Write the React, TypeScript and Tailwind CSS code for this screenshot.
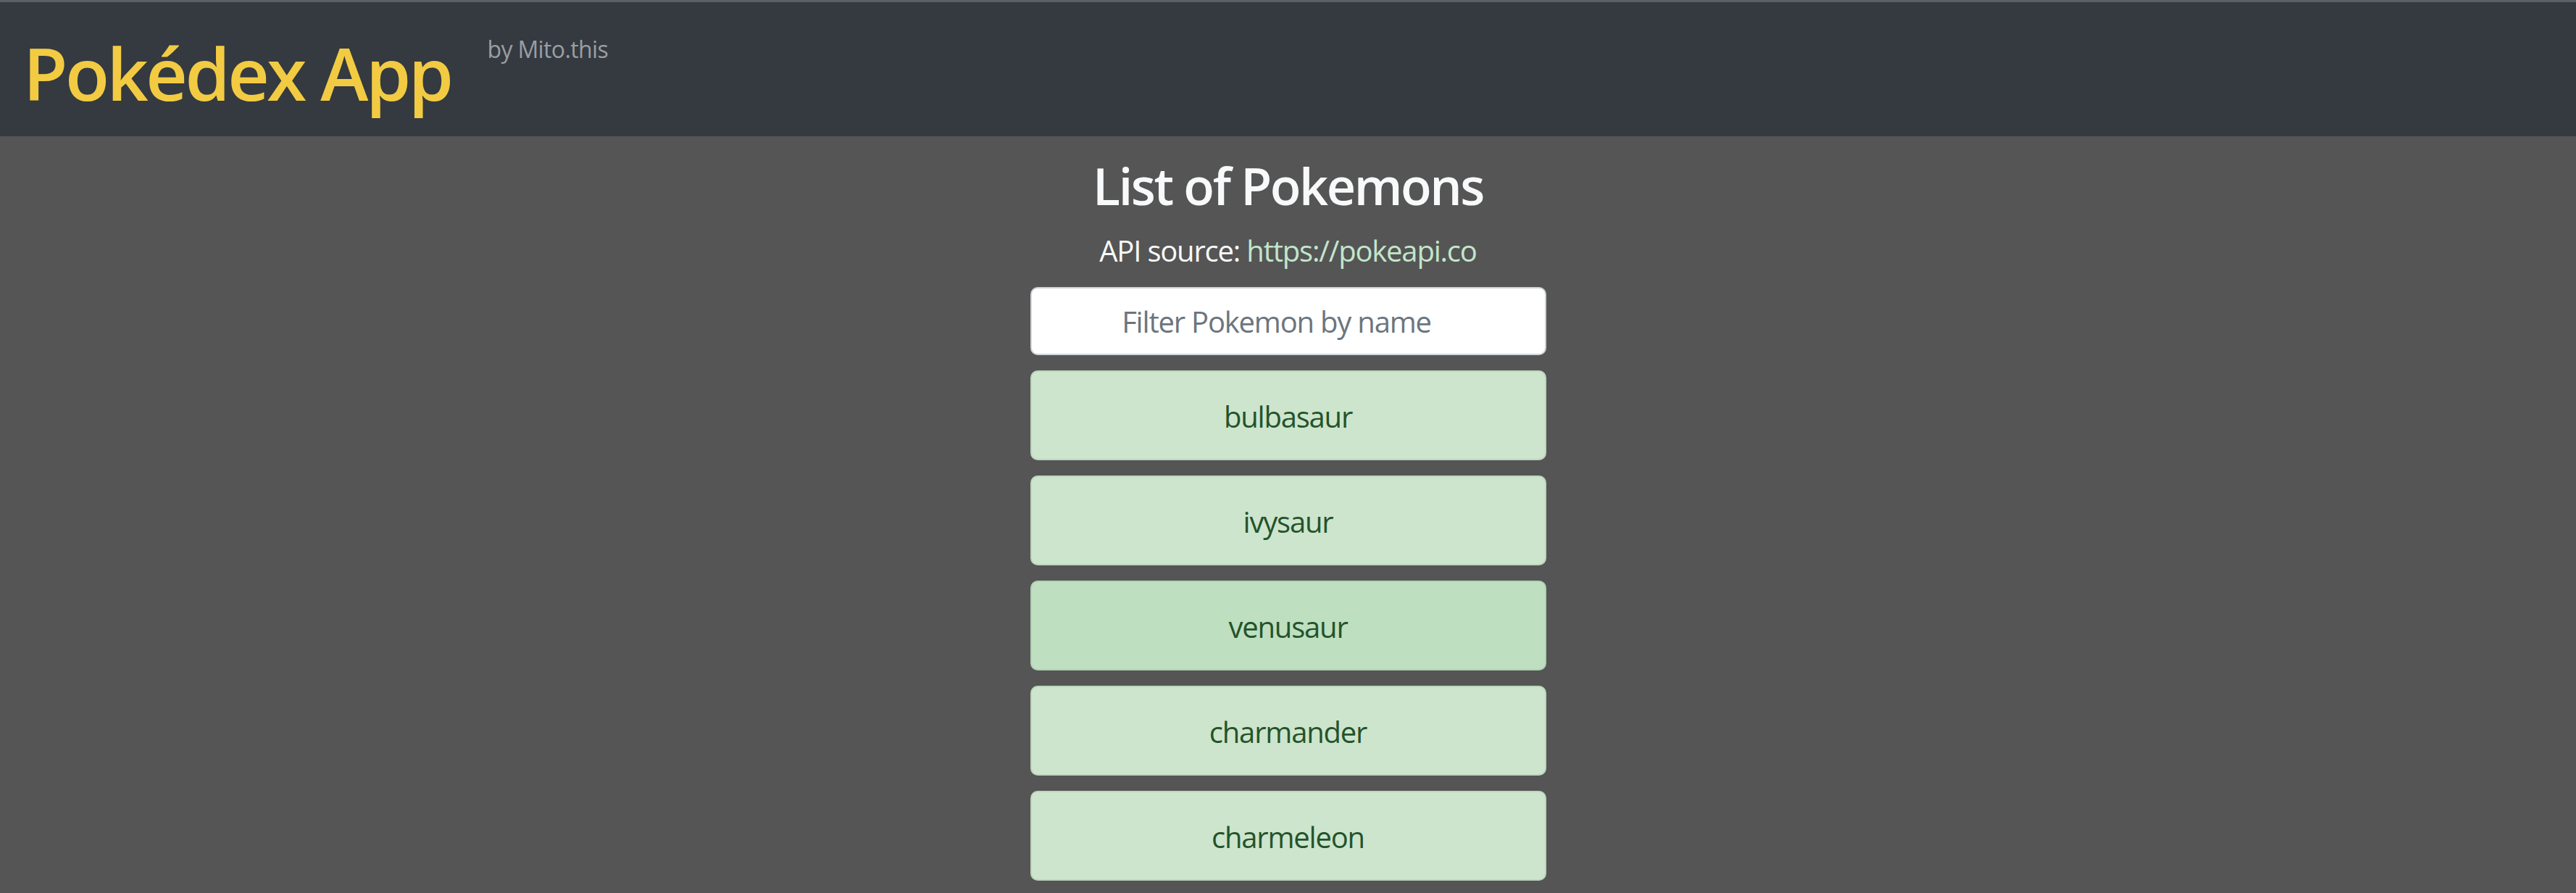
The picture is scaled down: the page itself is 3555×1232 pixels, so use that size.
import React from "react";

const pokemons = [
  "bulbasaur",
  "ivysaur",
  "venusaur",
  "charmander",
  "charmeleon",
  "charizard",
  "squirtle",
];

export default function App() {
  return (
    <div className="min-h-screen bg-[#555555] font-['Open_Sans','Noto_Sans',sans-serif]">
      <div className="h-[3px] bg-[#5e5f63]" />
      <nav className="h-[185px] bg-[#343a40] flex items-start pt-[37px] pl-[32px]">
        <h1 className="text-[100px] leading-[1.2] text-[#f2cb43] tracking-[-0.035em] font-semibold m-0">
          Pokédex App
        </h1>
        <small className="ml-[50px] mt-[4px] text-[32px] leading-[1.5] text-[#9a9ea3] tracking-[-0.02em]">
          by Mito.this
        </small>
      </nav>
      <main className="flex flex-col items-center pt-[26px] pb-[40px]">
        <h3 className="text-[70px] leading-[1.2] font-semibold text-[#f8f9fa] tracking-[-0.035em] m-0">
          List of Pokemons
        </h3>
        <p className="mt-[18px] text-[40px] leading-[1.5] text-[#f8f9fa] tracking-[-0.03em]">
          API source: <a className="text-[#c3e6cb]">https://pokeapi.co</a>
        </p>
        <input
          className="mt-[20px] w-[712px] h-[94px] bg-white rounded-[10px] border-[2px] border-[#ced4da] text-center pr-[32px] text-[40px] tracking-[-0.03em] text-[#495057] placeholder:text-[#6c757d] outline-none"
          placeholder="Filter Pokemon by name"
        />
        <div className="mt-[21px] flex flex-col gap-[21px]">
          {pokemons.map((p) => (
            <div
              key={p}
              className={
                p === "venusaur"
                  ? "w-[712px] h-[124px] pt-[3px] rounded-[10px] border-[2px] border-[#b2d1b4] bg-[#bedfc0] flex items-center justify-center text-[40px] leading-[1.5] tracking-[-0.03em] text-[#24532a]"
                  : "w-[712px] h-[124px] pt-[3px] rounded-[10px] border-[2px] border-[#bcd6bd] bg-[#cde5cd] flex items-center justify-center text-[40px] leading-[1.5] tracking-[-0.03em] text-[#24532a]"
              }
            >
              {p}
            </div>
          ))}
        </div>
      </main>
    </div>
  );
}
